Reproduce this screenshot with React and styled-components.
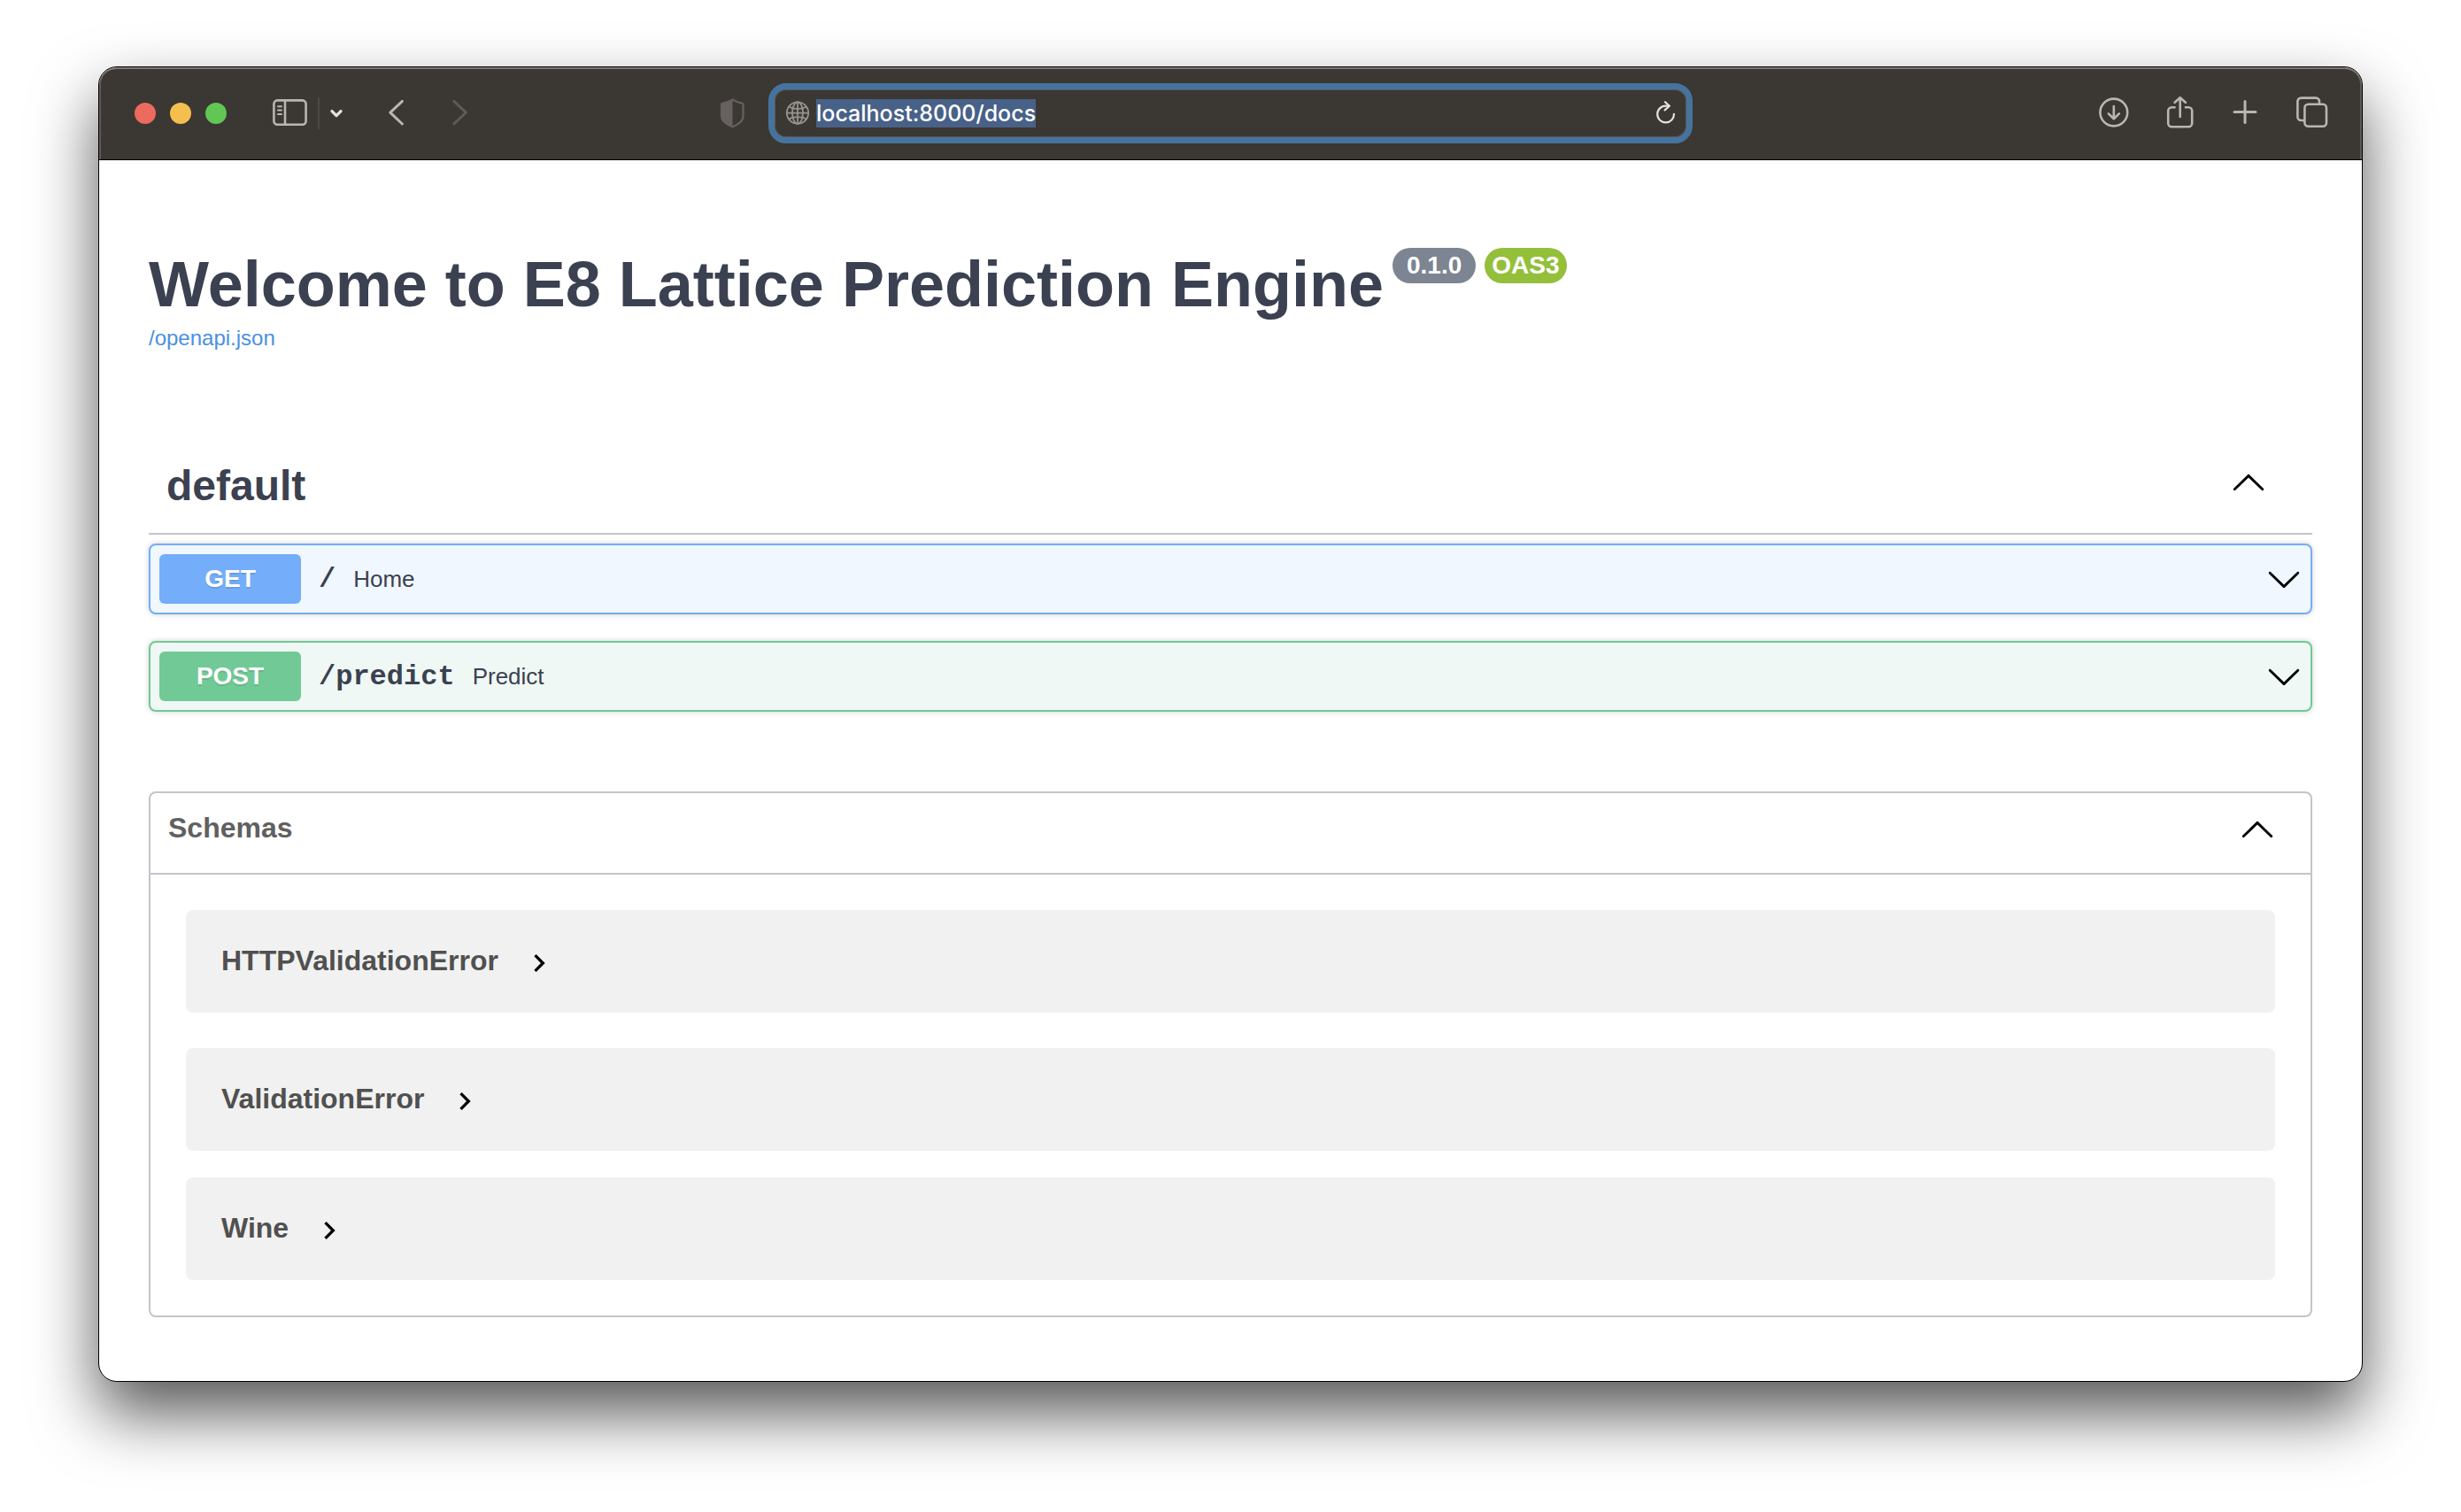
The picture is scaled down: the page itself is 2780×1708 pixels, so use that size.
import React, { useEffect, useRef, useState } from "react";
import styled, { createGlobalStyle } from "styled-components";

const sans = '"Liberation Sans", Arial, sans-serif';
const mono = '"Liberation Mono", "Courier New", monospace';
const ink = "#3b4151";
const rule = "#c4c4ca";

const GlobalStyle = createGlobalStyle`
  *, *::before, *::after { box-sizing: border-box; }
  body { margin: 0; background: #fff; font-family: ${sans}; color: ${ink}; }
  button { margin: 0; padding: 0; border: 0; background: none; font: inherit; color: inherit; cursor: pointer; }
  svg { display: block; }
`;

const Desktop = styled.div`
  min-height: 100vh;
  padding: 75px 111px 147px;
  overflow: hidden;
`;

const Window = styled.div`
  border: 1px solid #000;
  border-radius: 21px;
  overflow: hidden;
  background: #fff;
  box-shadow: 0 36px 72px rgba(0, 0, 0, 0.66);
`;

const Toolbar = styled.header`
  display: grid;
  grid-template-columns: 1fr minmax(0, 1044px) 1fr;
  align-items: center;
  height: 105px;
  border-bottom: 1px solid #000;
  border-radius: 20px 20px 0 0;
  background: #3b3733;
  color: #b9b5b1;
  box-shadow: inset 0 2px #7d7974, inset 2px 0 #5e5a56, inset -2px 0 #5e5a56;
`;

const ToolbarStart = styled.div`
  display: flex;
  align-items: center;
  padding: 0 27px 0 40px;
`;

const ToolbarEnd = styled.div`
  display: flex;
  align-items: center;
  justify-content: flex-end;
  gap: 39px;
  padding-right: 38px;
`;

const Lights = styled.div`
  display: flex;
  gap: 16px;
  margin-right: 52px;
`;

const Light = styled.button`
  width: 24px;
  height: 24px;
  border-radius: 50%;
  background: ${(p) => p.$color};
`;

const SidebarGroup = styled.div`
  display: flex;
  align-items: center;
  gap: 11px;
  margin-right: 50px;
`;

const Divider = styled.span`
  width: 2px;
  height: 36px;
  background: #4c4845;
`;

const History = styled.div`
  display: flex;
  gap: 52px;
  margin-right: auto;
`;

const IconButton = styled.button`
  display: grid;
  place-items: center;
  flex: none;
  color: ${(p) => p.$color || "inherit"};
`;

const AddressBar = styled.label`
  display: flex;
  align-items: center;
  height: 68px;
  padding: 0 12px;
  border: 7px solid #46739d;
  border-radius: 20px;
  box-shadow: inset 0 0 0 1px #5d5855;
`;

const AddressInput = styled.input`
  flex: 1;
  min-width: 0;
  height: 32px;
  margin: 0 7px;
  padding: 0;
  border: 0;
  outline: 0;
  background: none;
  color: #fff;
  font: 500 25px/32px Inter, sans-serif;
  &::selection { background: #486188; color: #fff; }
`;

const Page = styled.main`
  padding: 99px 56px 72px;
`;

const TitleRow = styled.div`
  display: flex;
  align-items: flex-start;
  gap: 10px;
`;

const Title = styled.h1`
  margin: 0;
  font-size: 72px;
  line-height: 82px;
  font-weight: 700;
`;

const Badge = styled.span`
  padding: 0 ${(p) => p.$pad}px;
  border-radius: 20px;
  background: ${(p) => p.$color};
  color: #fff;
  font-size: 28px;
  line-height: 40px;
  font-weight: 700;
`;

const SpecLink = styled.a`
  display: block;
  width: fit-content;
  margin-top: 6px;
  color: #4990e2;
  font-size: 24px;
  line-height: 28px;
  text-decoration: none;
`;

const TagHeader = styled.div`
  display: flex;
  align-items: center;
  justify-content: space-between;
  margin-top: 103px;
  padding: 20px 52px 23px 20px;
  border-bottom: 2px solid ${rule};
`;

const TagName = styled.h2`
  margin: 0;
  font-size: 48px;
  line-height: 60px;
`;

const TagToggle = styled.button`
  padding-bottom: 6px;
`;

const Operations = styled.div`
  display: grid;
  gap: 30px;
  margin-top: 10px;
`;

const Operation = styled.button`
  display: flex;
  align-items: center;
  width: 100%;
  padding: 10px;
  border: 2px solid ${(p) => p.$color};
  border-radius: 8px;
  background: ${(p) => p.$tint};
  box-shadow: 0 0 6px rgba(0, 0, 0, 0.19);
  text-align: left;
`;

const Method = styled.span`
  width: 160px;
  border-radius: 6px;
  background: ${(p) => p.$color};
  color: #fff;
  font-size: 28px;
  line-height: 56px;
  font-weight: 700;
  text-align: center;
  text-shadow: 0 2px 0 rgba(0, 0, 0, 0.1);
`;

const Path = styled.span`
  margin: 0 20px;
  font-family: ${mono};
  font-size: 32px;
  font-weight: 700;
`;

const Summary = styled.span`
  flex: 1;
  font-size: 26px;
`;

const Schemas = styled.section`
  margin-top: 90px;
  border: 2px solid ${rule};
  border-radius: 8px;
`;

const SchemasHeader = styled.button`
  display: flex;
  align-items: center;
  justify-content: space-between;
  width: 100%;
  padding: 22px 40px 28px 20px;
`;

const SchemaLabel = styled.span`
  padding-bottom: 6px;
  color: ${(p) => p.$color};
  font-size: 32px;
  line-height: 34px;
  font-weight: 700;
`;

const SchemaList = styled.div`
  display: flex;
  flex-direction: column;
  gap: 30px;
  padding: 40px;
  border-top: 2px solid ${rule};
`;

const SchemaCard = styled.button`
  display: flex;
  align-items: center;
  gap: 26px;
  padding: 40px 40px 36px;
  border-radius: 8px;
  background: #f1f1f1;
  &:first-child { margin-bottom: 10px; }
`;

const LargeArrow = ({ up }) => (
  <svg width="40" height="40" viewBox="0 0 20 20" aria-hidden="true">
    <path
      fill="#000"
      transform={up ? "rotate(180 10 10)" : undefined}
      d="M17.418 6.109c.272-.268.709-.268.979 0s.271.701 0 .969l-7.908 7.83c-.27.268-.707.268-.979 0l-7.908-7.83c-.27-.268-.27-.701 0-.969.271-.268.709-.268.979 0L10 13.25z"
    />
  </svg>
);

const SmallArrow = () => (
  <svg width="40" height="40" viewBox="0 0 24 24" aria-hidden="true">
    <path fill="#000" d="M10 6L8.59 7.41 13.17 12l-4.58 4.59L10 18l6-6z" />
  </svg>
);

const Stroke = ({ w, h, width = 2.6, children }) => (
  <svg
    width={w}
    height={h}
    viewBox={`0 0 ${w} ${h}`}
    fill="none"
    stroke="currentColor"
    strokeWidth={width}
    strokeLinecap="round"
    strokeLinejoin="round"
    aria-hidden="true"
  >
    {children}
  </svg>
);

const operations = [
  { method: "GET", path: "/", summary: "Home", color: "#74adf9", tint: "#f0f7ff" },
  { method: "POST", path: "/predict", summary: "Predict", color: "#71c995", tint: "#eff8f4" },
];

const schemas = ["HTTPValidationError", "ValidationError", "Wine"];

export default function App() {
  const [address, setAddress] = useState("localhost:8000/docs");
  const input = useRef(null);

  useEffect(() => {
    input.current.focus();
    input.current.select();
  }, []);

  return (
    <>
      <GlobalStyle />
      <Desktop>
        <Window>
          <Toolbar>
            <ToolbarStart>
              <Lights>
                <Light $color="#ed6a5e" aria-label="Close" />
                <Light $color="#f5bf4f" aria-label="Minimize" />
                <Light $color="#62c655" aria-label="Zoom" />
              </Lights>
              <SidebarGroup>
                <IconButton aria-label="Sidebar">
                  <Stroke w={40} h={32}>
                    <rect x="1.4" y="1.4" width="36.2" height="27.4" rx="4" />
                    <path d="M14 1.6v27" strokeLinecap="butt" />
                    <path d="M6 8.2h4M6 12.6h4M6 17h4" strokeWidth="2" />
                  </Stroke>
                </IconButton>
                <Divider />
                <IconButton $color="#e4e2e0" aria-label="Tab groups">
                  <Stroke w={16} h={14} width={3.4}>
                    <path d="M3 4.6l5 5 5-5" />
                  </Stroke>
                </IconButton>
              </SidebarGroup>
              <History>
                <IconButton aria-label="Back">
                  <Stroke w={20} h={32} width={3}>
                    <path d="M16.4 2.4L2.8 15.2l13.6 12.8" />
                  </Stroke>
                </IconButton>
                <IconButton $color="#5e5a57" aria-label="Forward">
                  <Stroke w={20} h={32} width={3}>
                    <path d="M2.8 2.4l13.600 12.800L2.800 28" />
                  </Stroke>
                </IconButton>
              </History>
              <IconButton $color="#66615e" aria-label="Privacy report">
                <svg width="28" height="34" viewBox="0 0 28 34" aria-hidden="true">
                  <path
                    d="M14.500 1.400c3.400 2.600 7.200 3.500 10.600 4.200 1 .3 1.400.9 1.400 1.900v12.200c0 6.300-4.400 9-12 12.600C6.800 28.700 2 26 2 19.700V7.500c0-1 .4-1.600 1.400-1.900C6.800 4.900 11 4 14.500 1.400z"
                    fill="none"
                    stroke="currentColor"
                    strokeWidth="2.2"
                    strokeLinejoin="round"
                  />
                  <path d="M14.500 1.400V32.300C6.800 28.700 2 26 2 19.700V7.500c0-1 .4-1.600 1.400-1.900C6.800 4.900 11 4 14.500 1.400z" fill="currentColor" />
                </svg>
              </IconButton>
            </ToolbarStart>

            <AddressBar>
              <Stroke w={28} h={28} width={1.8}>
                <g stroke="#96928f">
                  <circle cx="14" cy="13.600" r="12.200" />
                  <ellipse cx="14" cy="13.600" rx="6" ry="12.200" />
                  <path d="M14 1.400v24.400M1.800 13.600h24.400M4.200 6.800c5.800 3 13.800 3 19.600 0M4.200 20.400c5.800-3 13.800-3 19.600 0" />
                </g>
              </Stroke>
              <AddressInput
                ref={input}
                aria-label="Address"
                spellCheck={false}
                value={address}
                onChange={(e) => setAddress(e.target.value)}
              />
              <IconButton $color="#e4e2e0" aria-label="Reload">
                <Stroke w={24} h={28} width={2.2}>
                  <path d="M22 14.800a9.400 9.400 0 1 1-9.400-9.200h4" />
                  <path d="M12 1.200l4.800 4.600-5.200 4.600" />
                </Stroke>
              </IconButton>
            </AddressBar>

            <ToolbarEnd>
              <IconButton aria-label="Downloads">
                <Stroke w={36} h={38} width={2.6}>
                  <circle cx="18.800" cy="18" r="15.400" />
                  <path d="M18.800 11v14M12.800 19.400l6 5.800 6-5.800" />
                </Stroke>
              </IconButton>
              <IconButton aria-label="Share">
                <Stroke w={36} h={38} width={2.6}>
                  <path d="M13.600 12.200H9.200a4 4 0 0 0-4 4v14a4 4 0 0 0 4 4h19a4 4 0 0 0 4-4v-14a4 4 0 0 0-4-4h-4.400" strokeLinecap="butt" />
                  <path d="M18.700 23V1.800M12.600 6.800l6.100-5.600 6.100 5.600" />
                </Stroke>
              </IconButton>
              <IconButton aria-label="New tab">
                <Stroke w={36} h={38} width={3}>
                  <path d="M17 5.500v24M5 17.500h24" />
                </Stroke>
              </IconButton>
              <IconButton aria-label="Show all tabs">
                <Stroke w={36} h={38} width={2.6}>
                  <rect x="9.400" y="8.800" width="24.600" height="25" rx="4" />
                  <path d="M26 8V5.600a4 4 0 0 0-4-4H5.400a4 4 0 0 0-4 4V23a4 4 0 0 0 4 4H9" strokeLinecap="butt" />
                </Stroke>
              </IconButton>
            </ToolbarEnd>
          </Toolbar>

          <Page>
            <TitleRow>
              <Title>Welcome to E8 Lattice Prediction Engine</Title>
              <Badge $color="#7d8492" $pad={16}>0.1.0</Badge>
              <Badge $color="#93bf3b" $pad={8}>OAS3</Badge>
            </TitleRow>
            <SpecLink href="#openapi">/openapi.json</SpecLink>

            <TagHeader>
              <TagName>default</TagName>
              <TagToggle aria-label="Collapse operations">
                <LargeArrow up />
              </TagToggle>
            </TagHeader>
            <Operations>
              {operations.map((o) => (
                <Operation key={o.path} $color={o.color} $tint={o.tint}>
                  <Method $color={o.color}>{o.method}</Method>
                  <Path>{o.path}</Path>
                  <Summary>{o.summary}</Summary>
                  <LargeArrow />
                </Operation>
              ))}
            </Operations>

            <Schemas>
              <SchemasHeader>
                <SchemaLabel $color="#606060">Schemas</SchemaLabel>
                <LargeArrow up />
              </SchemasHeader>
              <SchemaList>
                {schemas.map((name) => (
                  <SchemaCard key={name}>
                    <SchemaLabel $color="#505050">{name}</SchemaLabel>
                    <SmallArrow />
                  </SchemaCard>
                ))}
              </SchemaList>
            </Schemas>
          </Page>
        </Window>
      </Desktop>
    </>
  );
}
